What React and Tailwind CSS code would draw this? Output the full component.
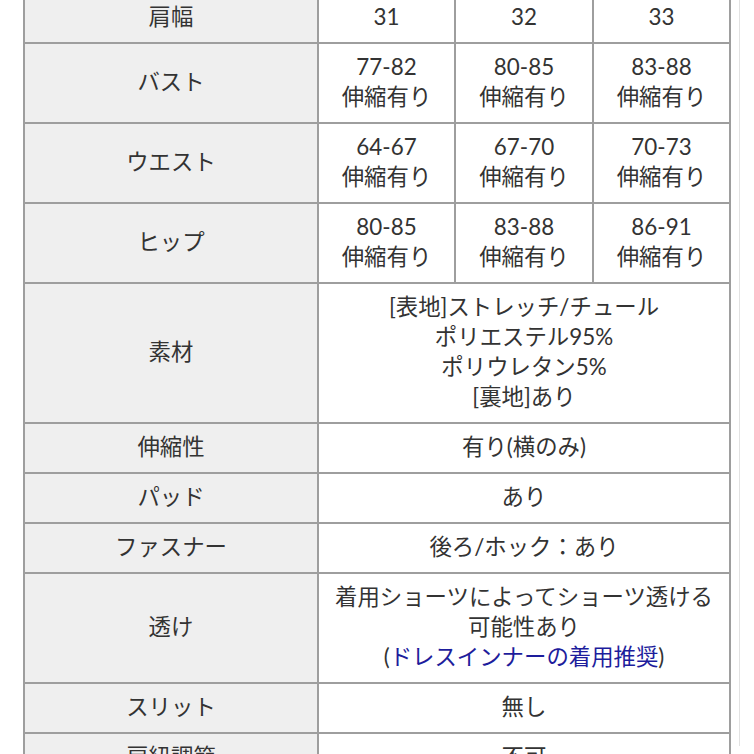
import React from "react";

const F = { fontFamily: '"Lato", "Noto Sans CJK JP", sans-serif' };

function Label({ children }) {
  return (
    <div className="bg-[#efefef] flex items-center justify-center text-center pt-[8px] pb-[10px]">
      {children}
    </div>
  );
}

function Val({ children, span }) {
  return (
    <div
      className={
        "bg-white flex flex-col items-center justify-center text-center pt-[8px] pb-[10px] " +
        (span ? "col-span-3" : "")
      }
    >
      {children}
    </div>
  );
}

export default function App() {
  const sizeRows = [
    ["肩幅", ["31"], ["32"], ["33"]],
    ["バスト", ["77-82", "伸縮有り"], ["80-85", "伸縮有り"], ["83-88", "伸縮有り"]],
    ["ウエスト", ["64-67", "伸縮有り"], ["67-70", "伸縮有り"], ["70-73", "伸縮有り"]],
    ["ヒップ", ["80-85", "伸縮有り"], ["83-88", "伸縮有り"], ["86-91", "伸縮有り"]],
  ];
  return (
    <div className="w-[754px] h-[754px] overflow-hidden bg-white" style={F}>
      <div className="w-[740px] h-full border-r border-[#e2e2e2]">
        <div className="ml-[23px] -mt-[8px] w-[708px] bg-[#9e9e9e] p-[2px] grid grid-cols-[292px_135px_136px_135px] gap-[2px] text-[22.4px] leading-[30px] text-[#333]">
          {sizeRows.map(([label, ...vals]) => (
            <React.Fragment key={label}>
              <Label>{label}</Label>
              {vals.map((v, i) => (
                <Val key={i}>
                  {v.map((l, j) => (
                    <div key={j}>{l}</div>
                  ))}
                </Val>
              ))}
            </React.Fragment>
          ))}
          <Label>素材</Label>
          <Val span>
            <div>[表地]ストレッチ/チュール</div>
            <div>ポリエステル95%</div>
            <div>ポリウレタン5%</div>
            <div>[裏地]あり</div>
          </Val>
          <Label>伸縮性</Label>
          <Val span>
            <div>有り(横のみ)</div>
          </Val>
          <Label>パッド</Label>
          <Val span>
            <div>あり</div>
          </Val>
          <Label>ファスナー</Label>
          <Val span>
            <div>後ろ/ホック：あり</div>
          </Val>
          <Label>透け</Label>
          <Val span>
            <div>着用ショーツによってショーツ透ける</div>
            <div>可能性あり</div>
            <div>
              (<span className="text-[#1d1d9c]">ドレスインナーの着用推奨</span>)
            </div>
          </Val>
          <Label>スリット</Label>
          <Val span>
            <div>無し</div>
          </Val>
          <Label>肩紐調節</Label>
          <Val span>
            <div>不可</div>
          </Val>
        </div>
      </div>
    </div>
  );
}
